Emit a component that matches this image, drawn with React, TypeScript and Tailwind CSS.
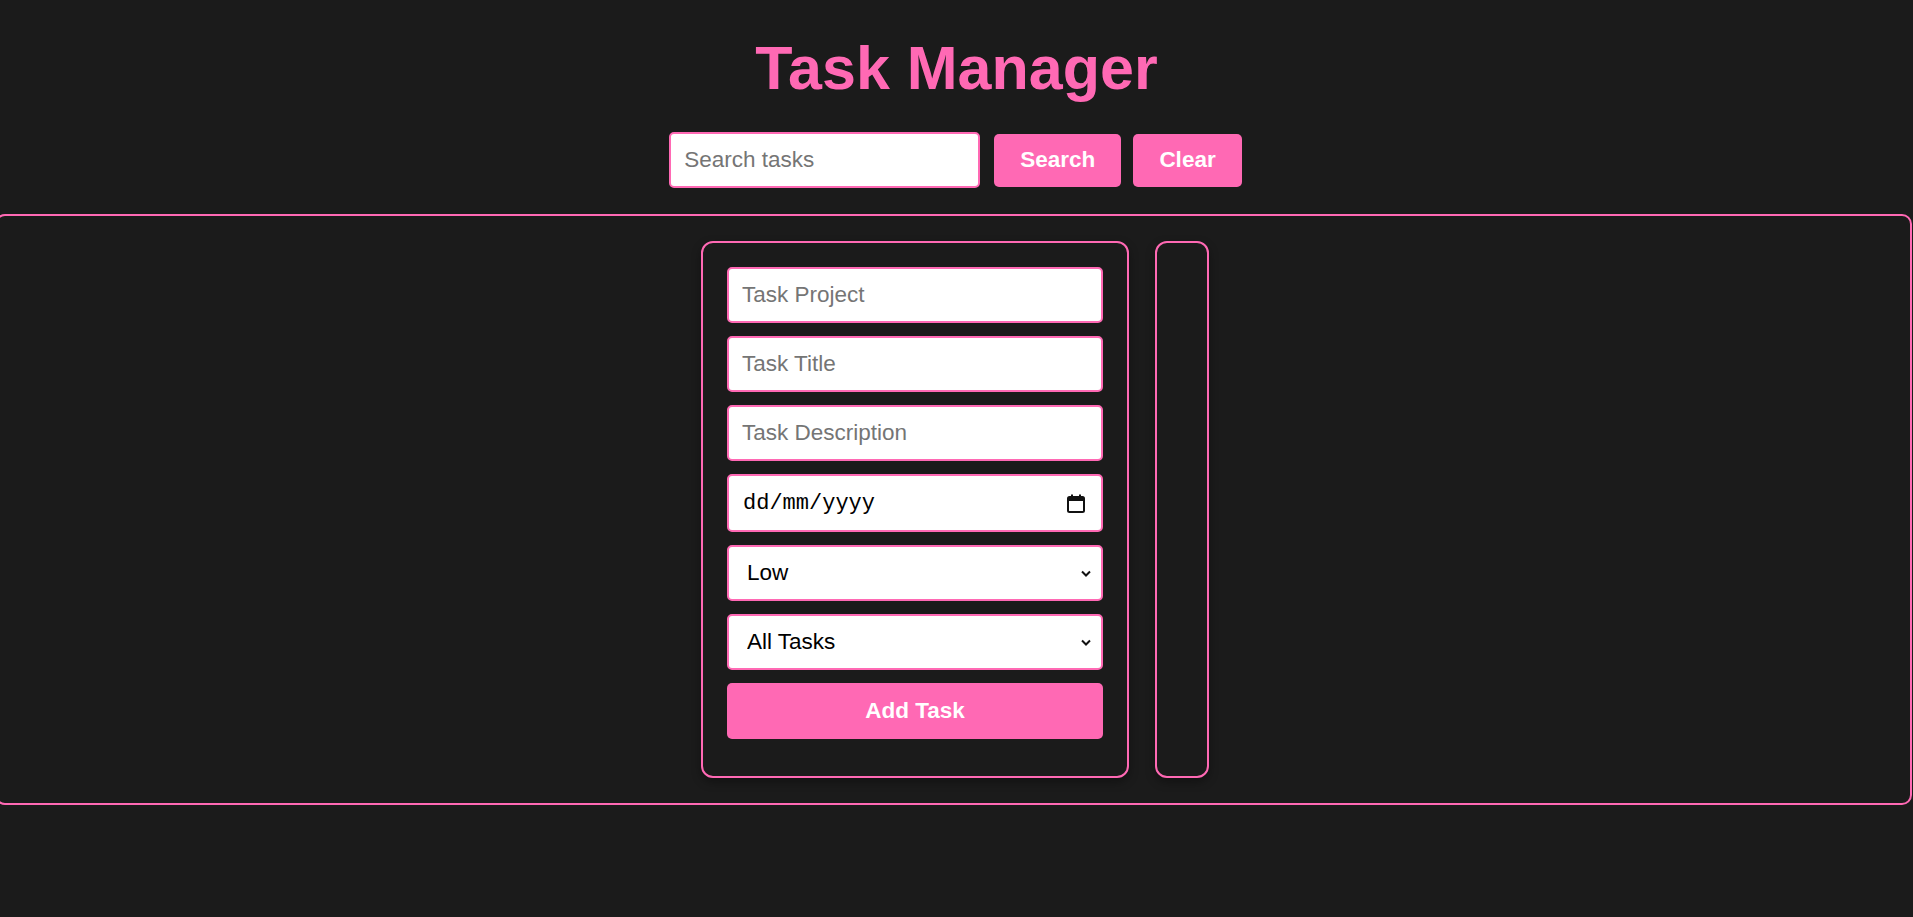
import { useState } from "react";

const sans = "font-['Liberation_Sans',Arial,sans-serif]";

function Chevron() {
  return (
    <svg width="10" height="7" viewBox="0 0 10 7" className="shrink-0">
      <path d="M1 1.5l4 4 4-4" fill="none" stroke="#111" strokeWidth="2" />
    </svg>
  );
}

function CalendarIcon() {
  return (
    <svg width="18" height="19" viewBox="0 0 18 19" className="shrink-0">
      <rect x="1" y="3" width="16" height="15" rx="1.5" fill="none" stroke="#111" strokeWidth="2" />
      <rect x="1" y="3" width="16" height="4" fill="#111" />
      <rect x="4" y="0.5" width="2" height="3" fill="#111" />
      <rect x="12" y="0.5" width="2" height="3" fill="#111" />
    </svg>
  );
}

export default function App() {
  const [search, setSearch] = useState("");
  const [project, setProject] = useState("");
  const [title, setTitle] = useState("");
  const [description, setDescription] = useState("");
  const [priority, setPriority] = useState("Low");
  const [filter, setFilter] = useState("All Tasks");

  const inputClass =
    "h-[56px] w-full rounded-[5px] border-2 border-[#ff69b4] bg-white pl-[13px] text-[22.5px] text-black outline-none placeholder:text-[#757575]";

  return (
    <main className={`min-h-screen bg-[#1b1b1b] pt-[37px] ${sans}`}>
      {/* Header */}
      <h1 className="h-[62px] text-center font-['Comic_Sans_MS','Liberation_Sans',sans-serif] text-[61px] font-bold leading-[62px] text-[#ff69b4]">
        Task Manager
      </h1>

      {/* Search */}
      <div className="mt-[33px] flex items-center justify-center pr-[2px]">
        <input
          value={search}
          onChange={(e) => setSearch(e.target.value)}
          placeholder="Search tasks"
          className="h-[56px] w-[311px] rounded-[5px] border-2 border-[#ff69b4] bg-white pl-[13px] text-[22.5px] text-black outline-none placeholder:text-[#757575]"
        />
        <button className="ml-[14px] h-[53px] rounded-[5px] bg-[#ff69b4] px-[26px] text-[22.5px] font-bold text-white">
          Search
        </button>
        <button
          onClick={() => setSearch("")}
          className="ml-[12px] h-[53px] rounded-[5px] bg-[#ff69b4] px-[26px] text-[22.5px] font-bold text-white"
        >
          Clear
        </button>
      </div>

      {/* Board */}
      <div className="-ml-[5px] mt-[26px] flex w-[calc(100%+4px)] justify-center gap-[26px] rounded-[10px] border-2 border-[#ff69b4] py-[25px] pl-[28px] pr-[25px]">
        <div className="flex w-[428px] flex-col gap-[13px] rounded-[12px] border-2 border-[#ff69b4] px-[24px] pb-[37px] pt-[24px] shadow-[0_4px_10px_rgba(0,0,0,0.35)]">
          <input
            value={project}
            onChange={(e) => setProject(e.target.value)}
            placeholder="Task Project"
            className={inputClass}
          />
          <input
            value={title}
            onChange={(e) => setTitle(e.target.value)}
            placeholder="Task Title"
            className={inputClass}
          />
          <input
            value={description}
            onChange={(e) => setDescription(e.target.value)}
            placeholder="Task Description"
            className={inputClass}
          />

          <div className="flex h-[58px] items-center rounded-[5px] border-2 border-[#ff69b4] bg-white pl-[14px] pr-[16px]">
            <input
              placeholder="dd/mm/yyyy"
              className="min-w-0 flex-1 bg-transparent font-['Liberation_Mono',monospace] text-[22px] text-black outline-none placeholder:text-black"
            />
            <CalendarIcon />
          </div>

          <div className="flex h-[56px] items-center rounded-[5px] border-2 border-[#ff69b4] bg-white pr-[10px]">
            <select
              value={priority}
              onChange={(e) => setPriority(e.target.value)}
              className="h-full min-w-0 flex-1 appearance-none bg-transparent pl-[18px] text-[22.5px] text-black outline-none"
            >
              <option>Low</option>
              <option>Medium</option>
              <option>High</option>
            </select>
            <Chevron />
          </div>

          <div className="flex h-[56px] items-center rounded-[5px] border-2 border-[#ff69b4] bg-white pr-[10px]">
            <select
              value={filter}
              onChange={(e) => setFilter(e.target.value)}
              className="h-full min-w-0 flex-1 appearance-none bg-transparent pl-[18px] text-[22.5px] text-black outline-none"
            >
              <option>All Tasks</option>
              <option>Completed</option>
              <option>Pending</option>
            </select>
            <Chevron />
          </div>

          <button className="h-[56px] w-full rounded-[5px] bg-[#ff69b4] text-[22.5px] font-bold text-white">
            Add Task
          </button>
        </div>

        {/* Task list */}
        <div className="w-[54px] rounded-[12px] border-2 border-[#ff69b4] p-[24px] shadow-[0_4px_10px_rgba(0,0,0,0.35)]"></div>
      </div>
    </main>
  );
}
